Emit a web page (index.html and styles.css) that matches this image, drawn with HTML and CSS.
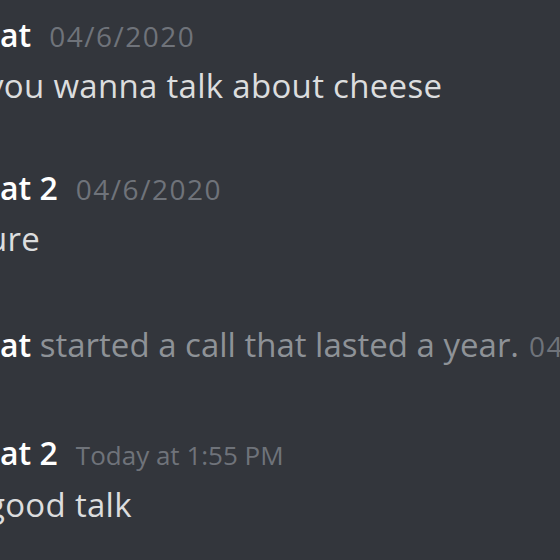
FILE: index.html
```html
<!DOCTYPE html>
<html lang="en">
<head>
  <meta charset="UTF-8">
  <title>Chat</title>
  <link rel="stylesheet" href="styles.css">
</head>
<body>

<div class="chat">
  <!-- primer mensaje -->
  <div class="msg first">
    <div class="head"><span class="name">at</span><span class="time">04/6/2020</span></div>
    <div class="text"><span class="cut">you wanna talk about cheese</span></div>
  </div>

  <div class="msg">
    <div class="head"><span class="name">at 2</span><span class="time">04/6/2020</span></div>
    <div class="text"><span class="cut cut-more">sure</span></div>
  </div>

  <!-- mensaje del sistema -->
  <div class="msg system">
    <span class="name">at</span> started a call that lasted a year.<span class="time">04/6/2020</span>
  </div>

  <div class="msg last">
    <div class="head"><span class="name">at 2</span><span class="time today">Today at 1:55 PM</span></div>
    <div class="text"><span class="cut">good talk</span></div>
  </div>
</div>

</body>
</html>
```

FILE: styles.css
```css
html, body {
  margin: 0;
  height: 100%;
}

body {
  background-color: #33363c;
  font-family: "Open Sans", Arial, sans-serif;
  overflow: hidden;
}

.chat {
  padding-top: 11px;
}

.msg {
  margin-top: 54px;
  white-space: nowrap;
}

.msg.first {
  margin-top: 0;
}

.msg.last {
  margin-top: 59px;
}

.head {
  font-size: 32px;
  line-height: 48px;
  margin-bottom: 2px;
}

.name {
  color: #fff;
  font-size: 32px;
  font-weight: 600;
}

.time {
  color: #6f737a;
  font-size: 28px;
  margin-left: 18px;
  letter-spacing: 1.5px;
}

.time.today {
  font-size: 26px;
  letter-spacing: 0;
}

.text {
  color: #dcddde;
  font-size: 33px;
  line-height: 48px;
  letter-spacing: 0.3px;
}

/* el texto viene recortado por la izquierda */
.cut {
  display: inline-block;
  margin-left: -13px;
}

.cut-more {
  margin-left: -29px;
}

.system {
  margin-top: 58px;
  line-height: 48px;
  color: #8e9297;
  font-size: 33px;
}

.system .name {
  font-size: 32px;
}

.system .time {
  margin-left: 10px;
}
```
